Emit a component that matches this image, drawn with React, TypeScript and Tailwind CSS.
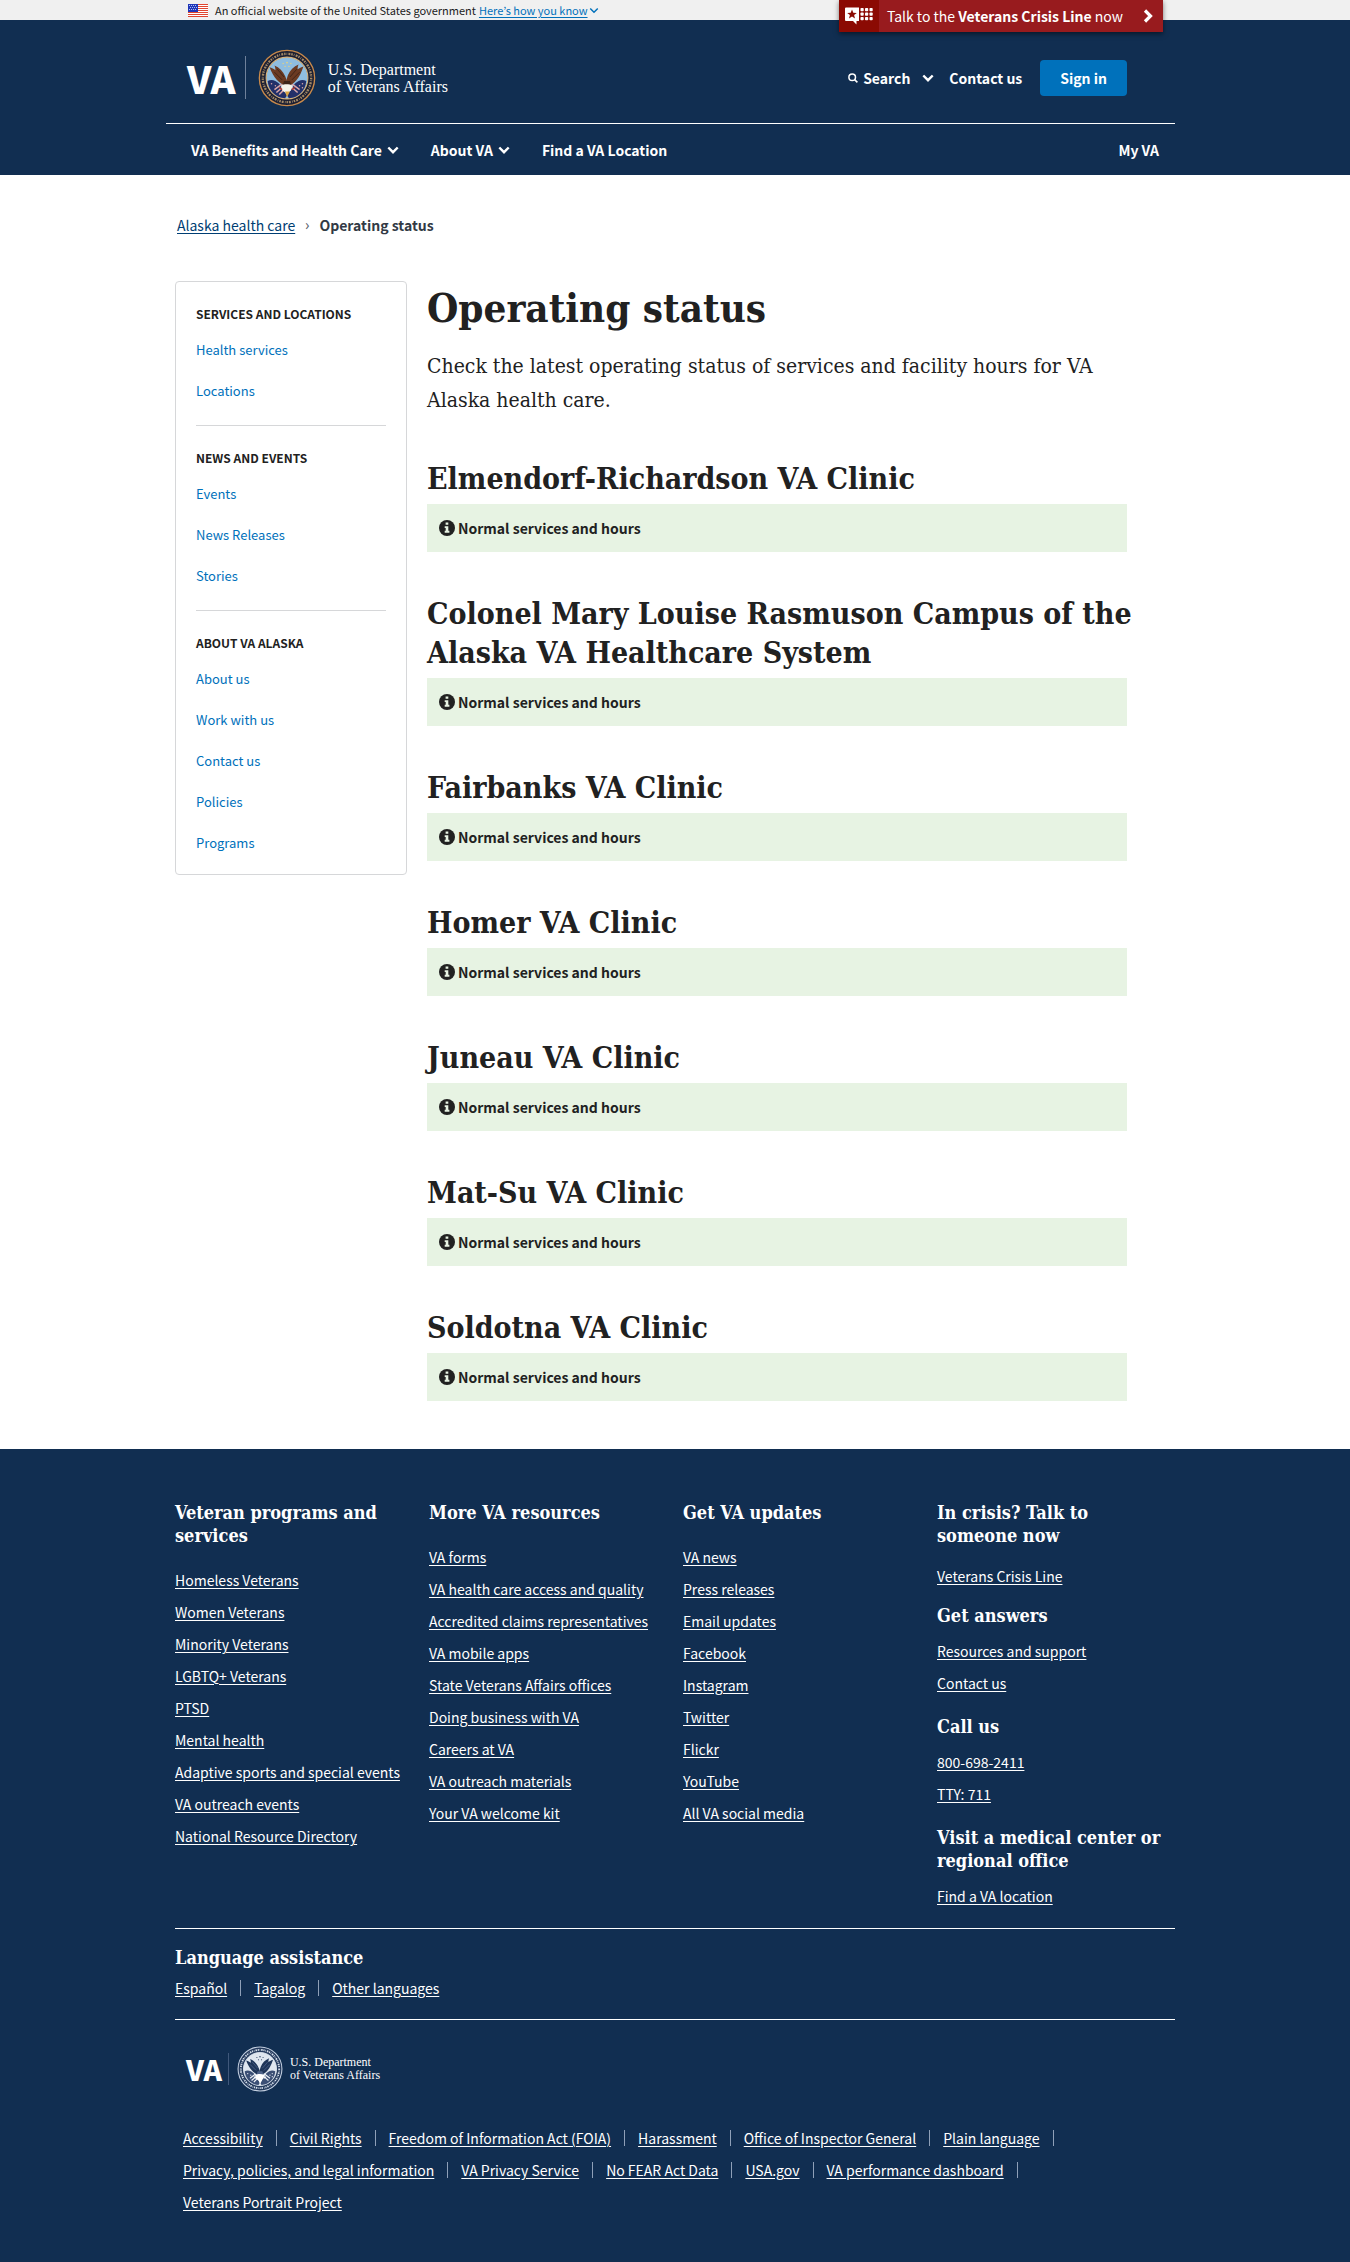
import React from 'react';

const clinics = [
  'Elmendorf-Richardson VA Clinic',
  'Colonel Mary Louise Rasmuson Campus of the Alaska VA Healthcare System',
  'Fairbanks VA Clinic',
  'Homer VA Clinic',
  'Juneau VA Clinic',
  'Mat-Su VA Clinic',
  'Soldotna VA Clinic',
];

const sideSections = [
  { title: 'Services and locations', links: ['Health services', 'Locations'] },
  { title: 'News and events', links: ['Events', 'News Releases', 'Stories'] },
  { title: 'About VA Alaska', links: ['About us', 'Work with us', 'Contact us', 'Policies', 'Programs'] },
];

const footerColumns = [
  {
    title: 'Veteran programs and services',
    links: [
      'Homeless Veterans',
      'Women Veterans',
      'Minority Veterans',
      'LGBTQ+ Veterans',
      'PTSD',
      'Mental health',
      'Adaptive sports and special events',
      'VA outreach events',
      'National Resource Directory',
    ],
  },
  {
    title: 'More VA resources',
    links: [
      'VA forms',
      'VA health care access and quality',
      'Accredited claims representatives',
      'VA mobile apps',
      'State Veterans Affairs offices',
      'Doing business with VA',
      'Careers at VA',
      'VA outreach materials',
      'Your VA welcome kit',
    ],
  },
  {
    title: 'Get VA updates',
    links: [
      'VA news',
      'Press releases',
      'Email updates',
      'Facebook',
      'Instagram',
      'Twitter',
      'Flickr',
      'YouTube',
      'All VA social media',
    ],
  },
];

const contactGroups = [
  { title: 'Get answers', links: ['Resources and support', 'Contact us'] },
  { title: 'Call us', links: ['800-698-2411', 'TTY: 711'] },
  { title: 'Visit a medical center or regional office', links: ['Find a VA location'] },
];

const legalRows = [
  [
    'Accessibility',
    'Civil Rights',
    'Freedom of Information Act (FOIA)',
    'Harassment',
    'Office of Inspector General',
    'Plain language',
  ],
  [
    'Privacy, policies, and legal information',
    'VA Privacy Service',
    'No FEAR Act Data',
    'USA.gov',
    'VA performance dashboard',
  ],
  ['Veterans Portrait Project'],
];

function Chevron({ className }: { className: string }) {
  return (
    <svg viewBox="0 0 12 8" className={className} fill="none" stroke="currentColor" strokeWidth="2.4" aria-hidden="true">
      <path d="M1.300 1.500 6 6.200l4.700-4.700" />
    </svg>
  );
}

function Flag() {
  return (
    <svg viewBox="0 0 20 13" className="h-[13px] w-5 shrink-0" aria-hidden="true">
      <rect width="20" height="13" fill="#fff" />
      {[0, 2, 4, 6, 8, 10, 12].map((y) => (
        <rect key={y} y={y} width="20" height="1" fill="#e0452f" />
      ))}
      <rect width="10" height="8" fill="#1f36b8" />
      {[1, 3, 5].map((y) =>
        [1, 3, 5, 7].map((x) => <rect key={`${x}-${y}`} x={x + (y === 3 ? 1 : 0)} y={y} width="1" height="1" fill="#aebcf2" />),
      )}
    </svg>
  );
}

function CrisisIcon() {
  return (
    <svg viewBox="0 0 28 20" className="h-5 w-7" fill="#fff" aria-hidden="true">
      <path d="M1 1.500h13V15h-2.500v3.500L8 15H1a1 1 0 0 1-1-1V2.500a1 1 0 0 1 1-1z" />
      <path
        fill="#8b0a03"
        d="m7 3.500 1.300 3.200 3.500.2-2.700 2.200.9 3.400-3-1.900-3 1.900.9-3.400L2.200 6.900l3.500-.2z"
      />
      {[2, 6.500, 11].map((y) =>
        [15.5, 20, 24.500].map((x) => <rect key={`${x}-${y}`} x={x} y={y} width="3.200" height="3.200" rx="0.800" />),
      )}
    </svg>
  );
}

function Seal({ mono = false, className }: { mono?: boolean; className: string }) {
  const c = mono
    ? { rim: '#c3cfe0', ring: '#23395c', ticks: '#d5deea', edge: '#dfe7f1', sky: '#dfe6ef', wing: '#1f3558', body: '#50648a', flagA: '#3b4f75', flagB: '#eef2f8', head: '#ffffff' }
    : { rim: '#c98a4b', ring: '#1b1f33', ticks: '#a58a66', edge: '#d8b27a', sky: '#8fbde0', wing: '#6b3a22', body: '#3f2418', flagA: '#233069', flagB: '#d8a5a8', head: '#f7f3ea' };
  return (
    <svg viewBox="0 0 60 60" className={className} aria-hidden="true">
      <circle cx="30" cy="30" r="28.600" fill={c.ring} stroke={c.rim} strokeWidth="1.400" />
      <circle cx="30" cy="30" r="25" fill="none" stroke={c.ticks} strokeWidth="2.400" strokeDasharray="1.500 1.100 0.700 1.300 2 1" />
      <circle cx="30" cy="30" r="21.600" fill={c.sky} stroke={c.edge} strokeWidth="1.100" />
      <path d="M10 33c4-2 8-1 12 3l8 12-2 3C18 50 11 43 10 33z" fill={c.flagA} />
      <path d="M50 33c-4-2-8-1-12 3l-8 12 2 3c10-1 17-8 18-18z" fill={c.flagA} />
      <path d="M17 42l8-6M19 45l8-7M22 47l6-6M43 42l-8-6M41 45l-8-7" stroke={c.flagB} strokeWidth="1.600" />
      <g fill={c.flagB}>
        <circle cx="14" cy="36" r="0.800" />
        <circle cx="18" cy="38" r="0.800" />
        <circle cx="46" cy="36" r="0.800" />
        <circle cx="43" cy="38" r="0.800" />
        <circle cx="46" cy="40" r="0.800" />
      </g>
      <path d="M29 38c-7-2-13-8-17-19 3 1 5 2 6 3 0-2 0-3-1-5 5 2 9 6 11 11 1 2 2 5 3 9z" fill={c.wing} />
      <path d="M31 38c7-2 12-8 16-20-3 1-5 2-6 3 0-2 0-3 1-5-5 2-9 6-11 11-1 3-2 6-2 10z" fill={c.wing} />
      <path d="M17 24l8 8M20 21l7 8M43 24l-8 8M40 21l-7 8" stroke={c.body} strokeWidth="1" />
      <path d="M27 33h6l2 6-3 4h-5l-2-4z" fill={c.body} />
      <path d="M24 38c3-2 8-2 12 0l-2 5-4 3-5-3z" fill={c.head} />
      <path d="M28 44h5l-3 6z" fill={mono ? '#ffffff' : '#d9a441'} />
      <path d="M22 40l3 2M38 40l-3 2" stroke={mono ? '#ffffff' : '#b3392f'} strokeWidth="1.400" />
      <g fill={mono ? '#1f3558' : '#e9d27a'}>
        <circle cx="30" cy="14" r="0.900" />
        <circle cx="26" cy="15" r="0.700" />
        <circle cx="34" cy="15" r="0.700" />
        <circle cx="28" cy="18" r="0.700" />
        <circle cx="32" cy="18" r="0.700" />
      </g>
    </svg>
  );
}

function StatusBox() {
  return (
    <a
      href="#status"
      className="mt-[6px] flex h-12 items-center gap-[3px] bg-[#e7f3e3] pl-3 text-[14px] leading-6 font-bold text-[#212121]"
    >
      <svg viewBox="0 0 16 16" className="size-4" aria-hidden="true">
        <circle cx="8" cy="8" r="8" fill="#212121" />
        <path fill="#e7f3e3" d="M6.600 2.500h2.700v2.300H6.600zM5.700 6.200h3.600v4.600h1.100v1.900H5.700v-1.900h1V8.100h-1z" />
      </svg>
      Normal services and hours
    </a>
  );
}

const footerHeading = "font-['DejaVu_Serif_Condensed','DejaVu_Serif',serif] text-[18px] leading-[23px] font-bold";
const footerLink = 'underline underline-offset-2';

function FooterLinks({ links }: { links: string[] }) {
  return (
    <ul>
      {links.map((l) => (
        <li key={l} className="leading-8">
          <a href="#link" className={footerLink}>
            {l}
          </a>
        </li>
      ))}
    </ul>
  );
}

export default function App() {
  return (
    <div className="bg-white font-['Noto_Sans_CJK_JP','Source_Sans_Pro',sans-serif] text-[14px] text-[#212121]">
      <div className="relative bg-[#f0f0f0]">
        <div className="mx-auto flex h-5 max-w-[1000px] items-center pl-[13px] text-[11px] leading-5">
          <Flag />
          <span className="ml-[7px]">An official website of the United States government</span>
          <button type="button" className="ml-[3px] flex items-center text-[#0071bb]">
            <span className="underline underline-offset-2">Here&rsquo;s how you know</span>
            <svg viewBox="0 0 12 8" className="ml-px h-[7px] w-[10px]" fill="none" stroke="currentColor" strokeWidth="1.800" aria-hidden="true">
              <path d="M1.500 1.500 6 6l4.500-4.500" />
            </svg>
          </button>
        </div>
        <div className="absolute inset-x-0 top-0 mx-auto flex max-w-[1000px] justify-end pr-3">
          <a href="#crisis" className="flex h-8 items-center bg-[#981b1e] text-[14px] leading-8 text-white shadow-[0_2px_5px_rgba(0,0,0,0.500)]">
            <span className="flex h-8 w-10 items-center justify-center bg-[#8b0a03]">
              <CrisisIcon />
            </span>
            <span className="ml-2">
              Talk to the <strong>Veterans Crisis Line</strong> now
            </span>
            <svg viewBox="0 0 10 14" className="mr-[10px] ml-5 h-[14px] w-[10px]" fill="none" stroke="currentColor" strokeWidth="3.200" aria-hidden="true">
              <path d="m2 1.500 5.500 5.500L2 12.500" />
            </svg>
          </a>
        </div>
      </div>

      <header className="bg-[#112e51] text-white">
        <div className="mx-auto max-w-[1000px]">
          <div className="flex h-[103px] items-center justify-between pt-3 pr-12 pl-3">
            <a href="#home" className="flex items-center" aria-label="VA, U.S. Department of Veterans Affairs">
              <span className="text-[38px] leading-[44px] font-black">VA</span>
              <span className="ml-[9px] h-[43px] w-px bg-[#6f819b]" />
              <Seal className="ml-3 size-[58px]" />
              <span className="ml-3 font-['Liberation_Serif',serif] text-[16px] leading-[17px]">
                U.S. Department
                <br />
                of Veterans Affairs
              </span>
            </a>
            <div className="flex items-center leading-6 font-bold">
              <button type="button" className="flex items-center">
                <svg viewBox="0 0 10 10" className="size-[10px]" fill="none" stroke="currentColor" strokeWidth="1.500" aria-hidden="true">
                  <circle cx="4.200" cy="4.200" r="3.300" />
                  <path d="m6.600 6.600 2.800 2.800" />
                </svg>
                <span className="ml-[5px]">Search</span>
                <Chevron className="ml-3 h-2 w-3" />
              </button>
              <a href="#contact" className="ml-[15px]">
                Contact us
              </a>
              <button type="button" className="ml-[18px] h-9 rounded-[4px] bg-[#0071bb] px-5">
                Sign in
              </button>
            </div>
          </div>
          <nav className="-ml-[9px] flex h-[52px] items-center border-t border-white pt-px pr-[16px] pl-[25px] leading-6 font-bold">
            <button type="button" className="flex items-center">
              VA Benefits and Health Care
              <Chevron className="ml-[5px] h-2 w-3" />
            </button>
            <button type="button" className="ml-8 flex items-center">
              About VA
              <Chevron className="ml-[5px] h-2 w-3" />
            </button>
            <a href="#find" className="ml-8">
              Find a VA Location
            </a>
            <a href="#my" className="ml-auto">
              My VA
            </a>
          </nav>
        </div>
      </header>

      <div className="mx-auto max-w-[1000px]">
        <nav aria-label="Breadcrumb" className="flex items-center pt-[38px] pl-[2px] leading-6">
          <a href="#alaska" className="text-[#003e73] underline underline-offset-2">
            Alaska health care
          </a>
          <span className="mx-[10px] font-['Open_Sans',sans-serif] text-[#5b616b]">›</span>
          <span className="font-bold text-[#323a45]">Operating status</span>
        </nav>

        <div className="flex items-start gap-5 pt-11 pb-12">
          <aside className="w-[232px] shrink-0 rounded-[4px] border border-[#d6d7d9] px-5 pt-4 pb-[11px]">
            {sideSections.map((s, i) => (
              <section key={s.title} className={i > 0 ? 'mt-[14px] border-t border-[#d6d7d9] pt-4' : ''}>
                <h2 className="text-[12px] leading-[31px] font-bold uppercase">{s.title}</h2>
                <ul>
                  {s.links.map((l) => (
                    <li key={l} className="text-[13px] leading-[41px]">
                      <a href="#page" className="text-[#0071bb]">
                        {l}
                      </a>
                    </li>
                  ))}
                </ul>
              </section>
            ))}
          </aside>
          <main className="max-w-[700px] min-w-0 flex-1">
            <h1 className="font-['DejaVu_Serif_Condensed','DejaVu_Serif',serif] text-[40px] leading-[54px] font-bold">Operating status</h1>
            <p className="mt-[14px] font-['DejaVu_Serif_Condensed','DejaVu_Serif',serif] text-[21px] leading-[34px]">
              Check the latest operating status of services and facility hours for VA Alaska health care.
            </p>
            {clinics.map((name) => (
              <section key={name} className="mt-[42px]">
                <h2 className="-mr-5 font-['DejaVu_Serif_Condensed','DejaVu_Serif',serif] text-[30px] leading-[39px] font-bold">{name}</h2>
                <StatusBox />
              </section>
            ))}
          </main>
        </div>
      </div>

      <footer className="bg-[#112e51] pb-11 text-white">
        <div className="mx-auto max-w-[1000px] pt-[52px]">
          <div className="grid grid-cols-4 gap-4">
            {footerColumns.map((c) => (
              <section key={c.title}>
                <h2 className={`${footerHeading} mb-[17px]`}>{c.title}</h2>
                <FooterLinks links={c.links} />
              </section>
            ))}
            <div className="pr-2">
              <h2 className={`${footerHeading} mb-[13px]`}>In crisis? Talk to someone now</h2>
              <FooterLinks links={['Veterans Crisis Line']} />
              {contactGroups.map((g, i) => (
                <section key={g.title} className={i > 0 ? 'mt-4' : 'mt-3'}>
                  <h2 className={`${footerHeading} mb-2`}>{g.title}</h2>
                  <FooterLinks links={g.links} />
                </section>
              ))}
            </div>
          </div>

          <section className="mt-4 border-y border-white pt-[17px] pb-[15px]">
            <h2 className={footerHeading}>Language assistance</h2>
            <ul className="mt-[3px] flex leading-8">
              {['Español', 'Tagalog', 'Other languages'].map((l, i) => (
                <li key={l} className="flex items-center">
                  <a href="#language" className={footerLink}>
                    {l}
                  </a>
                  {i < 2 && <span className="mx-[13px] h-4 w-px bg-[#8fa0b8]" />}
                </li>
              ))}
            </ul>
          </section>

          <a href="#home" className="flex items-center pt-[26px] pl-[11px]" aria-label="VA, U.S. Department of Veterans Affairs">
            <span className="text-[28px] leading-8 font-black">VA</span>
            <span className="ml-[6px] h-8 w-px bg-[#40587b]" />
            <Seal mono className="ml-2 size-[46px]" />
            <span className="ml-[7px] font-['Liberation_Serif',serif] text-[12px] leading-[13px]">
              U.S. Department
              <br />
              of Veterans Affairs
            </span>
          </a>

          <div className="pt-[30px] pl-2">
            {legalRows.map((row, r) => (
              <ul key={r} className="flex flex-wrap leading-8">
                {row.map((l) => (
                  <li key={l} className="flex items-center">
                    <a href="#legal" className={footerLink}>
                      {l}
                    </a>
                    {r < 2 && <span className="mx-[13px] h-4 w-px bg-[#8fa0b8]" />}
                  </li>
                ))}
              </ul>
            ))}
          </div>
        </div>
      </footer>
    </div>
  );
}
